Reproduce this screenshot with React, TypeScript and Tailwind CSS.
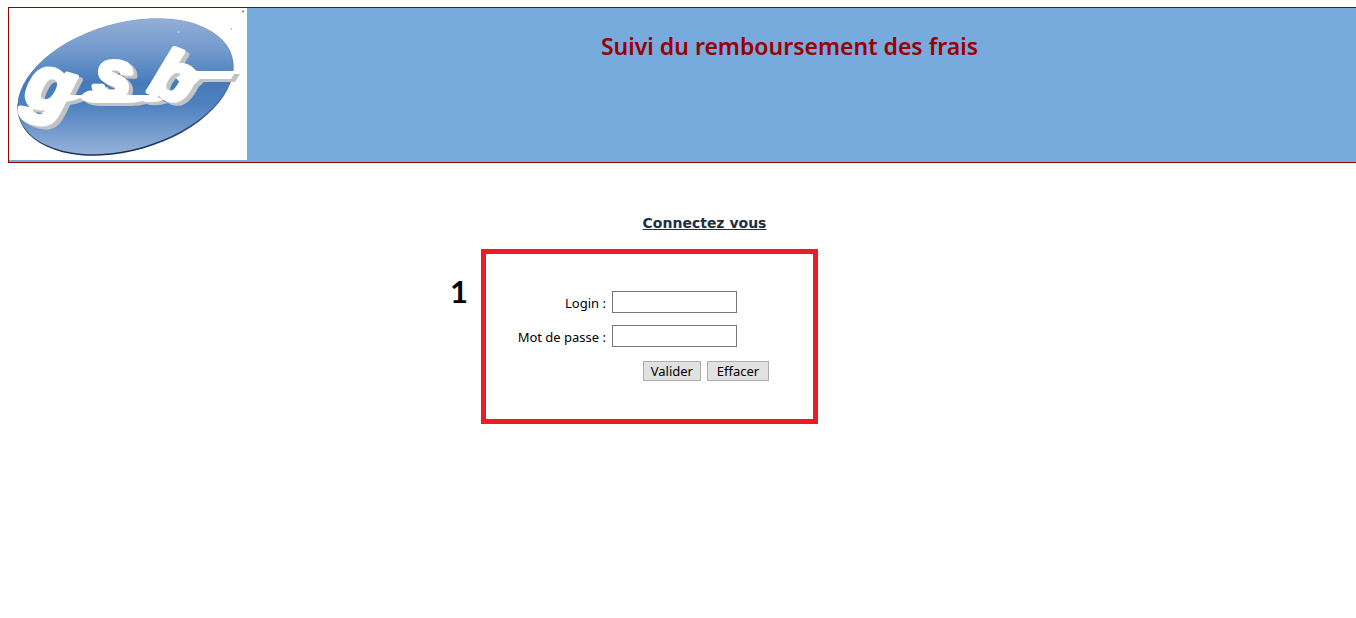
import React from "react";

function Logo() {
  return (
    <svg viewBox="9 8 238 152" className="h-[152px] w-[238px] shrink-0 bg-white" role="img" aria-label="gsb">
      <defs>
        <linearGradient id="oval" gradientUnits="userSpaceOnUse" x1="0" y1="18" x2="0" y2="156">
          <stop offset="0" stopColor="#94afd7" />
          <stop offset="0.25" stopColor="#6f98cd" />
          <stop offset="0.47" stopColor="#467cbb" />
          <stop offset="0.62" stopColor="#4c80bf" />
          <stop offset="1" stopColor="#98b3da" />
        </linearGradient>
        <linearGradient id="rim" gradientUnits="userSpaceOnUse" x1="0" y1="18" x2="0" y2="156">
          <stop offset="0" stopColor="#8199bd" />
          <stop offset="0.55" stopColor="#54779f" />
          <stop offset="1" stopColor="#102b50" />
        </linearGradient>
        <clipPath id="rim-shape">
          <ellipse cx="125.5" cy="87" rx="111" ry="64" transform="rotate(-16 125.5 87)" />
        </clipPath>
        <clipPath id="oval-shape">
          <ellipse cx="125.2" cy="86.4" rx="110.3" ry="63" transform="rotate(-16 125.2 86.4)" />
        </clipPath>
      </defs>
      <rect x="9" y="8" width="238" height="152" fill="url(#rim)" clipPath="url(#rim-shape)" />
      <rect x="9" y="8" width="238" height="152" fill="url(#oval)" clipPath="url(#oval-shape)" />
      <g fill="#ffffff" className="[filter:drop-shadow(4px_3px_0_#c2c3c4)]">
        <g
          fontFamily="'Liberation Sans', Arial, sans-serif"
          fontWeight="700"
          fontStyle="italic"
          stroke="#ffffff"
          strokeWidth="5"
          strokeLinejoin="round"
        >
          <text x="22" y="103" fontSize="76" rotate="16">g</text>
          <text x="92" y="95" fontSize="68" rotate="8">s</text>
          <text x="147" y="91" fontSize="68" rotate="20">b</text>
        </g>
        <path d="M62 95 H82 Q87 89 94 91 Q104 96 116 95 H152 L164 100 Q152 104 142 101 Q136 103 128 103 H94 Q84 102 80 98 Q72 102 60 102 Z" />
        <path d="M176 78 Q184 71 194 71 H236 L231 79 H200 Q194 84 188 92 Z" />
      </g>
      <circle cx="243" cy="11.5" r="1" fill="#777777" />
      <circle cx="231.5" cy="29" r="0.7" fill="#999999" />
      <circle cx="178.5" cy="32" r="1" fill="#b9d2ee" />
    </svg>
  );
}

const field = "h-[22px] w-[125px] border border-[#767676] bg-white px-1 text-[13px] outline-none";
const label = "pt-0.5 text-right leading-5";
const button = "h-5 border border-[#adadad] bg-[#e1e1e1] px-[7px] text-[13px] leading-4 text-black";

export default function App() {
  return (
    <div className="min-h-screen overflow-x-hidden bg-white pt-[7px] font-['Noto_Sans',sans-serif] text-black">
      <header className="ml-2 flex border-y border-l border-[#990000] bg-[#77aadd] pb-0.5">
        <Logo />
        <h1 className="flex-1 pt-[22px] pr-6 text-center text-[23px] leading-8 font-semibold text-[#990000]">
          Suivi du remboursement des frais
        </h1>
      </header>

      <main className="flex flex-col items-center pt-[50px]">
        <h2 className="ml-[53px] font-['DejaVu_Sans',Verdana,sans-serif] text-[14px] leading-5 font-bold text-[#1f2e40] underline">
          Connectez vous
        </h2>
        <div className="mt-4 mr-[88px] flex">
          <span className="w-[31px] pt-[22px] font-['Lato',sans-serif] text-[31px] leading-10 font-bold">1</span>
          <form
            className="w-[337px] border-5 border-[#ed1c24] pt-[37px] pb-[38px] text-[13px]"
            onSubmit={(event) => event.preventDefault()}
          >
            <div className="grid grid-cols-[120px_125px] items-center gap-x-1.5 gap-y-3">
              <label htmlFor="login" className={label}>Login :</label>
              <input id="login" type="text" className={field} />
              <label htmlFor="password" className={label}>Mot de passe :</label>
              <input id="password" type="password" className={field} />
            </div>
            <div className="mt-3.5 flex justify-end gap-1.5 pr-11">
              <button type="submit" className={button}>Valider</button>
              <button type="reset" className={`${button} min-w-[62px]`}>Effacer</button>
            </div>
          </form>
        </div>
      </main>
    </div>
  );
}
